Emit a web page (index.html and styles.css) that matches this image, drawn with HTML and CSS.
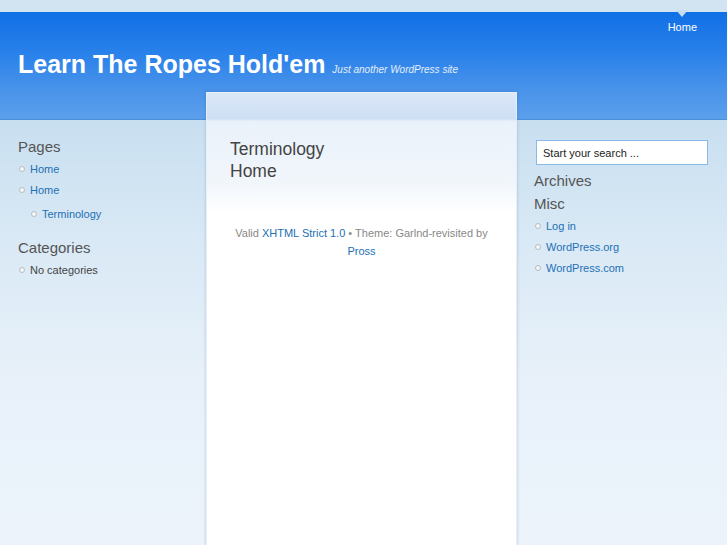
FILE: index.html
```html
<!DOCTYPE html>
<html>
<head>
<meta charset="utf-8">
<title>Learn The Ropes Hold'em</title>
<link rel="stylesheet" href="styles.css">
</head>
<body>
<div class="topbar"></div>
<header class="header">
  <nav class="nav">
    <a class="nav-item" href="#"><span class="nav-arrow"></span><span class="nav-label">Home</span></a>
  </nav>
  <h1 class="site-title"><a href="#">Learn The Ropes Hold'em</a> <span class="tagline">Just another WordPress site</span></h1>
</header>
<div class="main">
  <aside class="sidebar sidebar-left">
    <div class="widget">
      <h2 class="widget-title">Pages</h2>
      <ul class="list">
        <li><a href="#">Home</a></li>
        <li><a href="#">Home</a>
          <ul class="list sub">
            <li><a href="#">Terminology</a></li>
          </ul>
        </li>
      </ul>
    </div>
    <div class="widget">
      <h2 class="widget-title">Categories</h2>
      <ul class="list">
        <li class="plain">No categories</li>
      </ul>
    </div>
  </aside>
  <section class="content">
    <h2 class="post-title"><span class="line">Terminology</span><span class="line">Home</span></h2>
    <p class="credits">Valid <a href="#">XHTML Strict 1.0</a> • Theme: Garlnd-revisited by <a href="#">Pross</a></p>
  </section>
  <aside class="sidebar sidebar-right">
    <input class="search" type="text" value="Start your search ...">
    <div class="widget widget-empty">
      <h2 class="widget-title">Archives</h2>
    </div>
    <div class="widget">
      <h2 class="widget-title">Misc</h2>
      <ul class="list">
        <li><a href="#">Log in</a></li>
        <li><a href="#">WordPress.org</a></li>
        <li><a href="#">WordPress.com</a></li>
      </ul>
    </div>
  </aside>
</div>
</body>
</html>
```
FILE: styles.css
```css
html, body {
  margin: 0;
  padding: 0;
}
body {
  font-family: "Liberation Sans", Arial, sans-serif;
  background: #ecf3fb;
  color: #444;
  min-height: 545px;
}
a {
  color: #2370b5;
  text-decoration: none;
}
.topbar {
  height: 12px;
  background: #d2e4f1;
}
.header {
  height: 107px;
  background: linear-gradient(to bottom, #1170e6 0%, #2a82ea 40%, #4b94ea 75%, #5ba0ec 100%);
  border-bottom: 1px solid #4d8fd8;
  padding: 0 30px 0 18px;
  display: flex;
  flex-direction: column;
}
.nav {
  display: flex;
  justify-content: flex-end;
}
.nav-item {
  display: flex;
  flex-direction: column;
  align-items: center;
  color: #fff;
  font-size: 11px;
}
.nav-arrow {
  width: 0;
  height: 0;
  margin-top: -2px;
  border-left: 6px solid transparent;
  border-right: 6px solid transparent;
  border-top: 7px solid #c9ddf2;
}
.nav-label {
  line-height: 14px;
  margin-top: 3px;
}
.site-title {
  margin: 18px 0 0;
  font-size: 25px;
  line-height: 25px;
  font-weight: bold;
}
.site-title a {
  color: #fff;
}
.tagline {
  font-size: 10px;
  font-weight: normal;
  font-style: italic;
  color: #e4eefa;
}
.main {
  display: grid;
  grid-template-columns: 206px 311px 1fr;
  min-height: calc(100vh - 120px);
  background: linear-gradient(to bottom, #c8dff0 0px, #d9e9f5 120px, #e8f1fa 260px, #ecf3fb 425px);
}
.sidebar {
  padding-top: 18px;
}
.sidebar-left {
  padding-left: 18px;
}
.sidebar-right {
  padding-left: 17px;
  padding-top: 20px;
}
.widget {
  margin-bottom: 5px;
}
.widget-title {
  margin: 0 0 3px;
  font-size: 15px;
  line-height: 18px;
  font-weight: normal;
  color: #555;
}
.list {
  list-style: none;
  margin: 0 0 8px;
  padding: 0;
  font-size: 11px;
  line-height: 21px;
}
.list li {
  padding-left: 1px;
}
.list li::before {
  content: "";
  display: inline-block;
  width: 4px;
  height: 4px;
  border: 1px solid #b8bcc0;
  border-radius: 50%;
  background: #f4f6f8;
  margin-right: 5px;
  vertical-align: 1px;
}
.list .sub {
  margin: 3px 0 0;
  padding: 0 0 6px 11px;
}
.list li.plain {
  color: #444;
}
.content {
  margin-top: -28px;
  border: 1px solid #e6eef8;
  border-bottom: 0;
  box-shadow: 0 0 3px rgba(30, 70, 130, 0.25);
  background: linear-gradient(to bottom, #dbe8f7 0px, #cddff4 26px, #e9f1fa 28px, #f1f6fb 90px, #ffffff 120px);
  padding: 45px 23px 0 23px;
}
.post-title {
  margin: 0;
  font-size: 17.5px;
  line-height: 22px;
  font-weight: normal;
  color: #444;
}
.post-title .line {
  display: block;
}
.credits {
  margin: 42px 0 0;
  font-size: 11px;
  line-height: 18px;
  color: #888;
  text-align: center;
}
.search {
  display: block;
  box-sizing: border-box;
  width: 172px;
  height: 25px;
  margin: 0 0 7px 2px;
  padding: 0 6px;
  border: 1px solid #8bb9ea;
  background: #fff;
  font-family: "Liberation Sans", Arial, sans-serif;
  font-size: 11px;
  color: #222;
  outline: none;
}
.widget-empty {
  margin-bottom: 5px;
}
```
